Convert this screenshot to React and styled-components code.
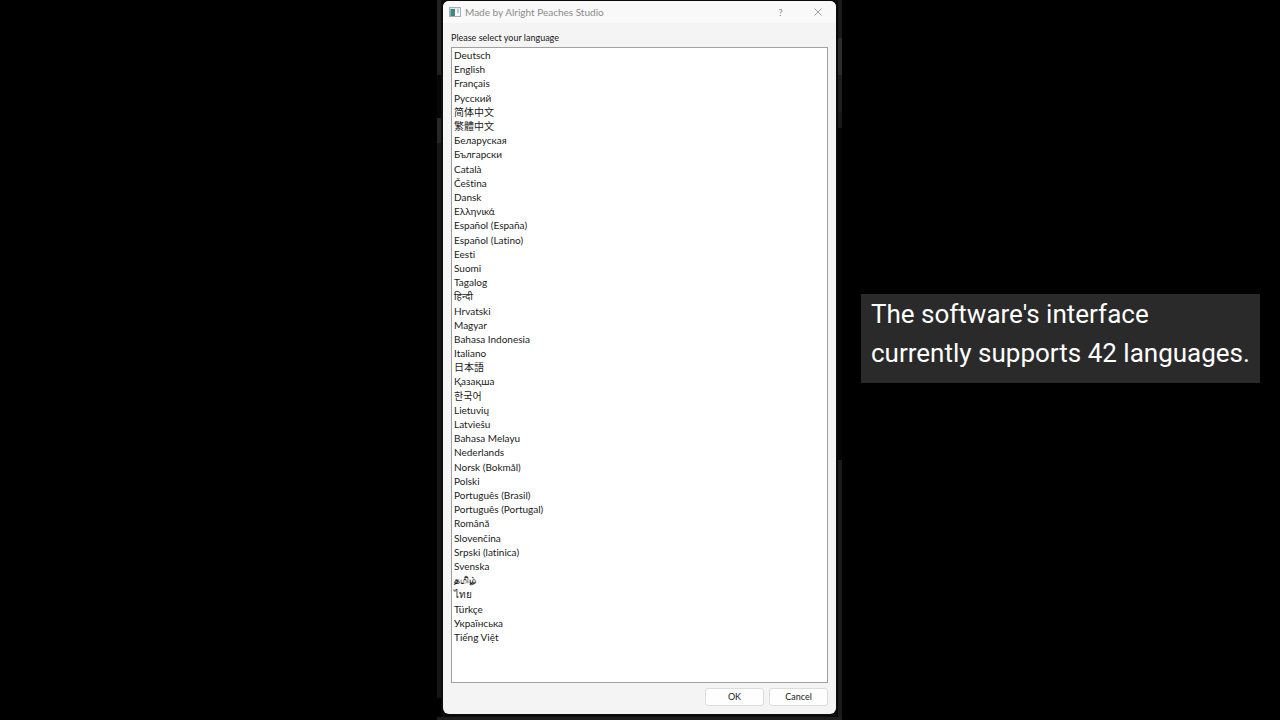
import { useState } from 'react';
import styled, { createGlobalStyle } from 'styled-components';

const languages = [
    ['de', 'Deutsch'],
    ['en', 'English'],
    ['fr', 'Français'],
    ['ru', 'Русский'],
    ['zh-Hans', '简体中文'],
    ['zh-Hant', '繁體中文'],
    ['be', 'Беларуская'],
    ['bg', 'Български'],
    ['ca', 'Català'],
    ['cs', 'Čeština'],
    ['da', 'Dansk'],
    ['el', 'Ελληνικά'],
    ['es', 'Español (España)'],
    ['es-419', 'Español (Latino)'],
    ['et', 'Eesti'],
    ['fi', 'Suomi'],
    ['tl', 'Tagalog'],
    ['hi', 'हिन्दी'],
    ['hr', 'Hrvatski'],
    ['hu', 'Magyar'],
    ['id', 'Bahasa Indonesia'],
    ['it', 'Italiano'],
    ['ja', '日本語'],
    ['kk', 'Қазақша'],
    ['ko', '한국어'],
    ['lt', 'Lietuvių'],
    ['lv', 'Latviešu'],
    ['ms', 'Bahasa Melayu'],
    ['nl', 'Nederlands'],
    ['nb', 'Norsk (Bokmål)'],
    ['pl', 'Polski'],
    ['pt-BR', 'Português (Brasil)'],
    ['pt', 'Português (Portugal)'],
    ['ro', 'Română'],
    ['sl', 'Slovenčina'],
    ['sr', 'Srpski (latinica)'],
    ['sv', 'Svenska'],
    ['ta', 'தமிழ்'],
    ['th', 'ไทย'],
    ['tr', 'Türkçe'],
    ['uk', 'Українська'],
    ['vi', 'Tiếng Việt'],
];

const GlobalStyle = createGlobalStyle`
    * {
        box-sizing: border-box;
    }
    body {
        margin: 0;
        background: #000;
    }
    button {
        font: inherit;
        color: inherit;
    }
`;

const Page = styled.div`
    display: grid;
    grid-template-columns: minmax(0, 1fr) 406px minmax(0, 1fr);
    min-height: 100vh;
    background: #000;
`;

// what shows of the app behind the dialog
const Backdrop = styled.div`
    grid-column: 2;
    display: flex;
    padding: 1px 7px 6px 6px;
    background:
        linear-gradient(#1e1e1e, #1e1e1e) left bottom / 405px 3px no-repeat,
        linear-gradient(#202020 75px, #060606 75px 118px, #262626 118px 143px, #151515 143px 698px, #000 698px) left top / 4px 100% no-repeat,
        linear-gradient(#1a1a1a 38px, #2c2c2c 38px 75px, #1e1e1e 75px 112px, #181818 112px 128px, #040404 128px 460px, #1a1a1a 460px) 401px top / 4px 100% no-repeat,
        linear-gradient(to right, #0c0c0c 400px, #060606 400px 405px, #000 405px);
`;

const Dialog = styled.section`
    flex: 1;
    display: flex;
    flex-direction: column;
    border-radius: 6px;
    background: #f4f4f4;
    color: #1a1a1a;
    font-family: Lato, 'Noto Sans', 'Noto Sans CJK SC', 'Noto Sans CJK KR', sans-serif;
    font-size: 10px;
    font-variant-ligatures: no-common-ligatures;
    line-height: 14px;
`;

const TitleBar = styled.header`
    display: flex;
    align-items: center;
    height: 22px;
    padding: 0 0 0 6px;
    border-radius: 6px 6px 0 0;
    background: #f9f9f9;
    color: #8c8c8c;
`;

const Title = styled.h1`
    flex: 1;
    margin: 0 0 0 4px;
    font-size: 10px;
    font-weight: 400;
`;

const TitleButton = styled.button`
    display: flex;
    align-items: center;
    justify-content: center;
    width: 37px;
    height: 22px;
    padding: 0;
    border: 0;
    background: none;
`;

const Content = styled.div`
    flex: 1;
    display: flex;
    flex-direction: column;
    padding: 8px;
`;

const Prompt = styled.p`
    margin: 0 0 2px;
    font-size: 9px;
`;

const LanguageList = styled.ul`
    flex: 1;
    display: grid;
    grid-auto-rows: 1fr;
    margin: 0;
    padding: 0 2px 38px;
    border: 1px solid #a0a0a0;
    background: #fff;
    list-style: none;
`;

const LanguageRow = styled.li`
    display: flex;
    align-items: center;
    min-height: 0;
`;

const LanguageButton = styled.button`
    flex: 1;
    display: flex;
    align-items: center;
    height: 14px;
    padding: 0;
    border: 0;
    background: ${props => (props.$selected ? '#cce8ff' : 'none')};
    text-align: left;
    white-space: nowrap;

    &:lang(ta) {
        font-size: 9px;
        font-weight: 700;
    }
`;

const Actions = styled.footer`
    display: flex;
    justify-content: flex-end;
    gap: 5px;
    padding-top: 5px;
`;

const ActionButton = styled.button`
    width: 59px;
    height: 18px;
    padding: 0;
    border: 1px solid #dcdcdc;
    border-radius: 3px;
    background: #fefefe;
    font-size: 9px;
    line-height: 14px;
`;

const Side = styled.aside`
    display: flex;
    align-items: center;
    padding: 0 20px 43px 18px;
`;

const Caption = styled.p`
    flex: 1;
    margin: 0;
    padding: 1px 9px 10px 10px;
    background: #2a2a2a;
    color: #fff;
    font-family: Roboto, sans-serif;
    font-size: 26px;
    line-height: 39px;
`;

const AppIcon = () => (
    <svg width="12" height="10" viewBox="0 0 12 10" aria-hidden="true">
        <rect x="0.5" y="0.5" width="11" height="9" fill="#f4f8f8" stroke="#a9afb1" />
        <rect x="1" y="1" width="10" height="1" fill="#dfe5e6" />
        <rect x="1" y="2" width="5" height="7" fill="#3f8586" />
        <rect x="1" y="2" width="1" height="7" fill="#7fa9b4" />
        <rect x="8" y="2" width="2" height="4" fill="#b4cfcd" />
    </svg>
);

const CloseIcon = () => (
    <svg width="8" height="8" viewBox="0 0 8 8" aria-hidden="true">
        <path d="M0.5 0.5 7.5 7.5M7.5 0.5 0.5 7.5" stroke="#a0a0a0" fill="none" />
    </svg>
);

const App = () => {
    const [selected, setSelected] = useState(null);

    return (
        <Page>
            <GlobalStyle />
            <Backdrop>
                <Dialog role="dialog" aria-labelledby="dialog-title">
                    <TitleBar>
                        <AppIcon />
                        <Title id="dialog-title">Made by Alright Peaches Studio</Title>
                        <TitleButton type="button">?</TitleButton>
                        <TitleButton type="button" aria-label="Close">
                            <CloseIcon />
                        </TitleButton>
                    </TitleBar>
                    <Content>
                        <Prompt id="prompt">Please select your language</Prompt>
                        <LanguageList aria-labelledby="prompt">
                            {languages.map(([code, name]) => (
                                <LanguageRow key={code}>
                                    <LanguageButton
                                        type="button"
                                        lang={code}
                                        $selected={selected === code}
                                        aria-pressed={selected === code}
                                        onClick={() => setSelected(code)}
                                    >
                                        {name}
                                    </LanguageButton>
                                </LanguageRow>
                            ))}
                        </LanguageList>
                        <Actions>
                            <ActionButton type="button">OK</ActionButton>
                            <ActionButton type="button">Cancel</ActionButton>
                        </Actions>
                    </Content>
                </Dialog>
            </Backdrop>
            <Side>
                <Caption>The software's interface currently supports 42 languages.</Caption>
            </Side>
        </Page>
    );
};

export default App;
